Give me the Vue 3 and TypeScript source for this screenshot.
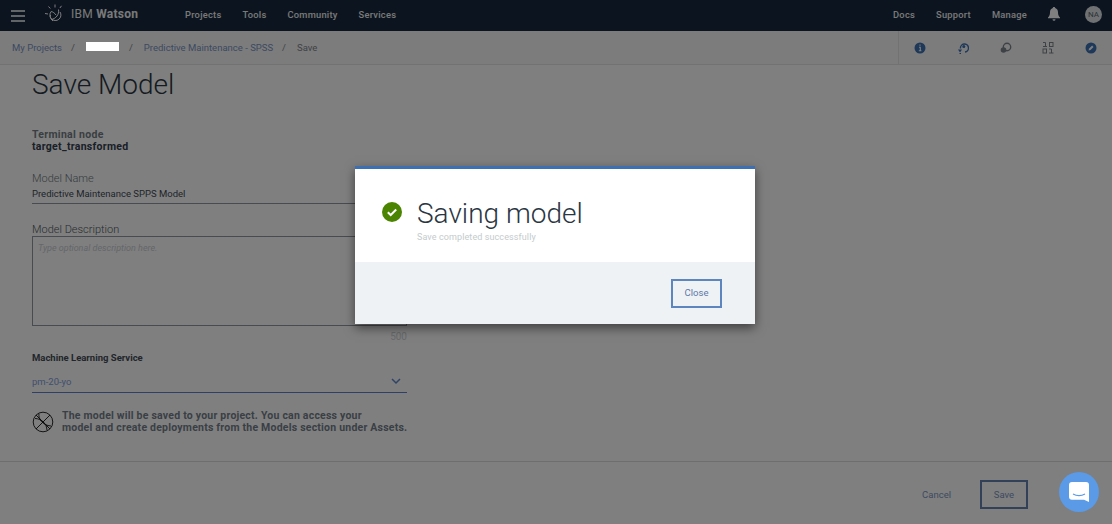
<template>
	<div class="page">
		<header class="topbar">
			<div class="topbar-left">
				<svg class="menu-icon" viewBox="0 0 14 12" width="14" height="12">
					<path d="M0 1h14M0 6h14M0 11h14" stroke="#fff" stroke-width="1.6" />
				</svg>
				<svg class="watson-logo" viewBox="0 0 20 20" width="20" height="20" fill="none" stroke="#fff" stroke-width="1">
					<path d="M10 .5v3M3.500 2.500l1.800 2M16.500 1.800l-1.600 2.200M0 9.500l3 .5" />
					<path d="M15 8a5.500 5.500 0 1 1-8.800-.5c1.700.3 3.500 1.600 4.800 3.500" />
					<path d="M13.500 5.500C14.500 10 11 15 6 15.500M8 17c-2-1.500-3.500-4-2.500-6" />
				</svg>
				<span class="brand">IBM <b>Watson</b></span>
				<nav class="nav-main">
					<a v-for="item in mainNav" :key="item">{{ item }}</a>
				</nav>
			</div>
			<div class="topbar-right">
				<a v-for="item in sideNav" :key="item">{{ item }}</a>
				<svg class="bell" viewBox="0 0 12 14" width="12" height="14">
					<path d="M6 0c.8 0 1.200.5 1.200 1.100C9 1.700 10 3.300 10 5.200c0 2.500.6 3.800 2 5.300v.7H0v-.7c1.400-1.500 2-2.800 2-5.300 0-1.900 1-3.500 2.800-4.100C4.800.5 5.200 0 6 0zM4.500 12.200h3a1.500 1.500 0 0 1-3 0z" fill="#fff" />
				</svg>
				<span class="avatar">NA</span>
			</div>
		</header>

		<div class="crumbs">
			<div class="crumb-path">
				<a>My Projects</a>
				<span class="sep">/</span>
				<span class="crumb-hidden"></span>
				<span class="sep">/</span>
				<a>Predictive Maintenance - SPSS</a>
				<span class="sep">/</span>
				<span class="crumb-current">Save</span>
			</div>
			<div class="crumb-tools">
				<svg viewBox="0 0 12 12" width="12" height="12">
					<circle cx="6" cy="6" r="5.500" fill="#3d70b2" />
					<path d="M6 2.500v1.300M5 5.300h1.300v3.200M4.800 8.700h2.600" stroke="#fff" stroke-width="1.100" fill="none" />
				</svg>
				<svg viewBox="0 0 12 12" width="12" height="12" fill="none">
					<path d="M3.500 6.500A4 4 0 1 1 8 10" stroke="#3d70b2" stroke-width="1.400" />
					<circle cx="6.800" cy="4.500" r="1.500" fill="#3d70b2" />
					<path d="M1 7.500h4L3 10.500z" fill="#3d70b2" />
					<path d="M2.500 11.500h1.500" stroke="#3d70b2" />
				</svg>
				<svg viewBox="0 0 12 12" width="12" height="12" fill="none">
					<circle cx="7" cy="5" r="3.700" stroke="#7d858b" stroke-width="1.400" />
					<circle cx="3.500" cy="8" r="2.800" fill="#7d858b" />
				</svg>
				<svg viewBox="0 0 12 12" width="12" height="12" fill="none" stroke="#7d858b" stroke-width="1">
					<path d="M1 .5h2.500v4M1 4.500h4" />
					<rect x="7.500" y=".5" width="3.500" height="4" />
					<rect x="1" y="7" width="3.500" height="4" />
					<path d="M7 7h2.500v4M7 11h4.500" />
				</svg>
				<svg viewBox="0 0 12 12" width="12" height="12">
					<circle cx="6" cy="6" r="5.500" fill="#3d70b2" />
					<path d="M3.500 8.500l.6-2 3-3 1.400 1.400-3 3z" fill="#fff" />
				</svg>
			</div>
		</div>

		<main class="content">
			<h1>Save Model</h1>
			<div class="form">
				<div class="terminal">
					<div class="terminal-label">Terminal node</div>
					<div class="terminal-value">target_transformed</div>
				</div>
				<label class="field-label name-label">Model Name</label>
				<div class="name-input">Predictive Maintenance SPPS Model</div>
				<label class="field-label desc-label">Model Description</label>
				<div class="desc-input">Type optional description here.</div>
				<div class="counter">500</div>
				<div class="service-label">Machine Learning Service</div>
				<div class="service-select">
					<span>pm-20-yo</span>
					<svg viewBox="0 0 10 7" width="10" height="7" fill="none">
						<path d="M1 1l4 4 4-4" stroke="#5f86d0" stroke-width="1.500" />
					</svg>
				</div>
				<div class="note">
					<svg viewBox="0 0 22 22" width="22" height="22" fill="none" stroke="#111" stroke-width=".9">
						<circle cx="11" cy="11" r="9.800" />
						<path d="M4 4l14 14M18 4L4 18M7 2.500c-1 5 3.500 12 12 12.500M3 7.500c6 0 12 5 12 12" />
					</svg>
					<p>The model will be saved to your project. You can access your<br />model and create deployments from the Models section under Assets.</p>
				</div>
			</div>
		</main>

		<footer class="actions">
			<a class="cancel">Cancel</a>
			<button class="btn-save">Save</button>
		</footer>

		<div class="overlay">
			<div class="modal">
				<div class="modal-body">
					<svg class="check" viewBox="0 0 20 20" width="20" height="20">
						<circle cx="10" cy="10" r="10" fill="#4b8400" />
						<path d="M5.800 10.300l2.900 2.700 5.500-5.500" fill="none" stroke="#fff" stroke-width="2" />
					</svg>
					<div>
						<h2>Saving model</h2>
						<p>Save completed successfully</p>
					</div>
				</div>
				<div class="modal-footer">
					<button class="btn-close">Close</button>
				</div>
			</div>
		</div>

		<div class="redaction"></div>
		<div class="chat">
			<svg viewBox="0 0 20 20" width="20" height="20">
				<path d="M3 0h14a3 3 0 0 1 3 3v17l-5-2.200H3a3 3 0 0 1-3-3V3a3 3 0 0 1 3-3z" fill="#fff" />
				<path d="M4 12c3.500 2 8.500 2 12 0" fill="none" stroke="#5a9ae6" stroke-width="1.200" />
			</svg>
		</div>
	</div>
</template>

<script setup lang="ts">
const mainNav: string[] = ['Projects', 'Tools', 'Community', 'Services'];
const sideNav: string[] = ['Docs', 'Support', 'Manage'];
</script>

<style>
html,
body {
	margin: 0;
	overflow: hidden;
}
</style>

<style scoped>
.page {
	position: relative;
	width: 1112px;
	height: 524px;
	display: flex;
	flex-direction: column;
	overflow: hidden;
	background: #fff;
	color: #344050;
	font-family: Roboto, 'Noto Sans', sans-serif;
}

.topbar {
	height: 31px;
	flex: none;
	box-sizing: border-box;
	padding-bottom: 3px;
	display: flex;
	align-items: center;
	justify-content: space-between;
	background: #17293e;
	color: #f2f2f2;
	font-size: 9.300px;
	font-weight: 500;
	letter-spacing: 0.25px;
}

.topbar-left,
.topbar-right {
	display: flex;
	align-items: center;
}

.menu-icon {
	margin-left: 11px;
	margin-top: 3px;
}

.watson-logo {
	margin-left: 20px;
}

.brand {
	margin-left: 6px;
	width: 114px;
	font-size: 12px;
	font-weight: 400;
}

.brand b {
	font-weight: 700;
}

.nav-main {
	display: flex;
	gap: 21px;
}

.topbar-right a {
	margin-right: 21px;
}

.bell {
	margin-right: 25px;
}

.avatar {
	width: 17px;
	height: 17px;
	margin-right: 10px;
	border-radius: 50%;
	background: #dfe3e6;
	color: #5a6872;
	font-size: 8px;
	font-weight: 400;
	line-height: 17px;
	text-align: center;
	letter-spacing: 0;
}

.crumbs {
	height: 34px;
	flex: none;
	box-sizing: border-box;
	display: flex;
	justify-content: space-between;
	align-items: stretch;
	border-bottom: 1px solid #e4e4e4;
	background: #f9f9f9;
	font-size: 9.500px;
	color: #7a94c4;
}

.crumb-path {
	display: flex;
	align-items: center;
	padding-left: 12px;
}

.sep {
	margin: 0 11px 0 9px;
	color: #7d858b;
}

.crumb-hidden {
	width: 34px;
}

.crumb-current {
	color: #7d858b;
}

.crumb-tools {
	width: 214px;
	box-sizing: border-box;
	padding: 0 15px;
	display: flex;
	align-items: center;
	justify-content: space-between;
	border-left: 1px solid #e4e4e4;
}

.content {
	flex: 1;
	padding-left: 32px;
}

h1 {
	margin: 4px 0 0;
	font-size: 28px;
	line-height: 32px;
	font-weight: 300;
	color: #2a3642;
}

.form {
	width: 375px;
}

.terminal {
	margin-top: 28px;
	font-size: 10.500px;
	line-height: 12px;
	font-weight: 700;
	letter-spacing: 0.3px;
}

.terminal-label {
	color: #747c86;
}

.field-label {
	display: block;
	font-size: 11px;
	line-height: 14px;
	font-weight: 300;
	color: #6d7880;
}

.name-label {
	margin-top: 19px;
}

.name-input {
	height: 18px;
	box-sizing: border-box;
	padding-top: 1px;
	border-bottom: 1px solid #90969e;
	font-size: 9.500px;
	line-height: 13px;
	color: #3e4a56;
}

.desc-label {
	margin-top: 19px;
	color: #4d5860;
}

.desc-input {
	height: 90px;
	margin-top: -1px;
	box-sizing: border-box;
	padding: 6px 5px;
	border: 1px solid #90969e;
	font-size: 9px;
	font-style: italic;
	color: #c8ced3;
}

.counter {
	margin-top: 5px;
	font-size: 10px;
	line-height: 12px;
	text-align: right;
	color: #ced3d7;
}

.service-label {
	margin-top: 9px;
	font-size: 9.500px;
	line-height: 12px;
	font-weight: 700;
	color: #444c56;
}

.service-select {
	height: 23px;
	margin-top: 6px;
	box-sizing: border-box;
	padding-right: 6px;
	display: flex;
	justify-content: space-between;
	align-items: center;
	border-bottom: 1px solid #5f80d0;
	font-size: 9.500px;
	color: #7fa0e0;
}

.note {
	margin-top: 17px;
	display: flex;
	gap: 8px;
	align-items: center;
}

.note svg {
	flex: none;
}

.note p {
	margin: 0;
	white-space: nowrap;
	font-size: 10.500px;
	line-height: 12px;
	font-weight: 700;
	letter-spacing: 0.22px;
	color: #747f8c;
}

.actions {
	height: 63px;
	flex: none;
	box-sizing: border-box;
	display: flex;
	align-items: center;
	justify-content: flex-end;
	padding: 2px 84px 0 0;
	border-top: 1px solid #dcdcdc;
}

.cancel {
	margin-right: 29px;
	font-size: 9.500px;
	color: #7a94c4;
}

.btn-save {
	width: 48px;
	height: 29px;
	border: 2px solid #6683b0;
	background: transparent;
	font: inherit;
	font-size: 9.500px;
	color: #7a94c4;
}

.overlay {
	position: absolute;
	inset: 0;
	display: flex;
	justify-content: center;
	align-items: flex-start;
	padding-top: 166px;
	padding-right: 2px;
	box-sizing: border-box;
	background: rgba(0, 0, 0, 0.5);
}

.modal {
	width: 400px;
	height: 158px;
	display: flex;
	flex-direction: column;
	box-sizing: border-box;
	border-top: 3px solid #3d70b2;
	background: #fff;
	box-shadow: 0 4px 10px rgba(0, 0, 0, 0.5);
}

.modal-body {
	flex: 1;
	display: flex;
	align-items: flex-start;
	gap: 15px;
	padding: 33px 0 0 27px;
}

.check {
	flex: none;
}

.modal-body h2 {
	margin: -5px 0 0;
	font-size: 28px;
	line-height: 34px;
	font-weight: 300;
	color: #2a3642;
}

.modal-body p {
	margin: 1px 0 0;
	font-size: 9px;
	line-height: 11px;
	letter-spacing: 0.1px;
	color: #c4cbcc;
}

.modal-footer {
	height: 62px;
	flex: none;
	display: flex;
	align-items: center;
	justify-content: flex-end;
	padding-right: 33px;
	background: #eff2f5;
}

.btn-close {
	width: 51px;
	height: 29px;
	padding-bottom: 3px;
	border: 2px solid #5d86bf;
	background: transparent;
	font: inherit;
	font-size: 9.500px;
	color: #5a78a8;
}

.redaction {
	position: absolute;
	left: 86px;
	top: 42px;
	width: 33px;
	height: 9px;
	background: #fff;
}

.chat {
	position: absolute;
	left: 1059px;
	top: 472px;
	width: 40px;
	height: 40px;
	display: flex;
	align-items: center;
	justify-content: center;
	border-radius: 50%;
	background: #5a9ae6;
}
</style>
